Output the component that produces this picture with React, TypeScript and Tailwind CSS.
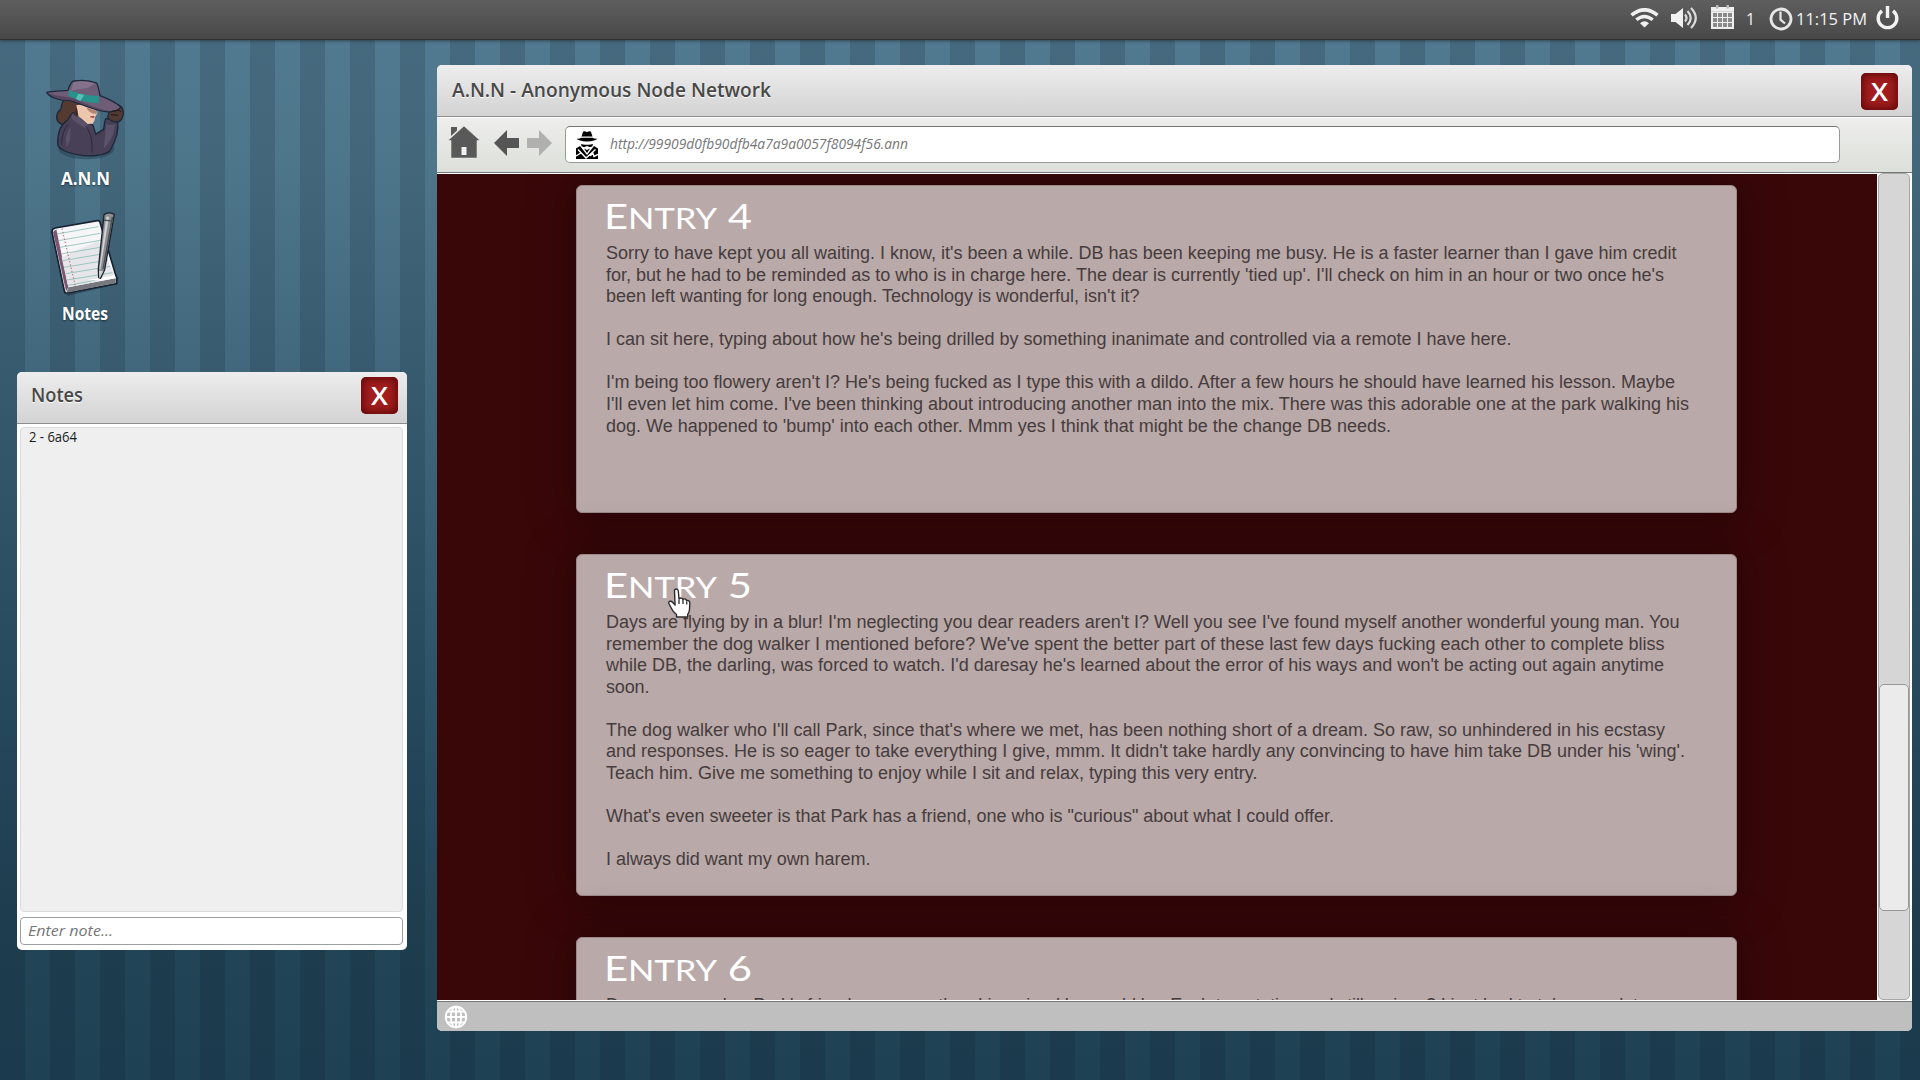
import { useLayoutEffect, useRef, useState } from "react";

/* Text set to an exact measure, either by tracking or by horizontal scale. */
function Fit({
  children,
  width,
  mode = "track",
  className = "",
}: {
  children: React.ReactNode;
  width: number;
  mode?: "track" | "scale";
  className?: string;
}) {
  const ref = useRef<HTMLSpanElement>(null);
  const [style, setStyle] = useState<React.CSSProperties>({});
  useLayoutEffect(() => {
    const el = ref.current;
    if (!el) return;
    const natural = el.getBoundingClientRect().width;
    const count = (el.textContent || "").length;
    setStyle(
      mode === "track"
        ? { letterSpacing: `${(width - natural) / Math.max(1, count - 1)}px` }
        : { transform: `scaleX(${width / natural})` },
    );
  }, []);
  return (
    <span className={`block whitespace-pre ${className}`} style={{ width }}>
      <span ref={ref} style={style} className="inline-block origin-left whitespace-pre">
        {children}
      </span>
    </span>
  );
}

type Line = [string, number];

const ENTRY4: Line[] = [
  ["Sorry to have kept you all waiting. I know, it's been a while. DB has been keeping me busy. He is a faster learner than I gave him credit", 1070.5],
  ["for, but he had to be reminded as to who is in charge here. The dear is currently 'tied up'. I'll check on him in an hour or two once he's", 1058],
  ["been left wanting for long enough. Technology is wonderful, isn't it?", 533.5],
  ["", 0],
  ["I can sit here, typing about how he's being drilled by something inanimate and controlled via a remote I have here.", 905.5],
  ["", 0],
  ["I'm being too flowery aren't I? He's being fucked as I type this with a dildo. After a few hours he should have learned his lesson. Maybe", 1069],
  ["I'll even let him come. I've been thinking about introducing another man into the mix. There was this adorable one at the park walking his", 1083],
  ["dog. We happened to 'bump' into each other. Mmm yes I think that might be the change DB needs.", 785],
];

const ENTRY5: Line[] = [
  ["Days are flying by in a blur! I'm neglecting you dear readers aren't I? Well you see I've found myself another wonderful young man. You", 1073.5],
  ["remember the dog walker I mentioned before? We've spent the better part of these last few days fucking each other to complete bliss", 1058.5],
  ["while DB, the darling, was forced to watch. I'd daresay he's learned about the error of his ways and won't be acting out again anytime", 1058],
  ["soon.", 43.5],
  ["", 0],
  ["The dog walker who I'll call Park, since that's where we met, has been nothing short of a dream. So raw, so unhindered in his ecstasy", 1059],
  ["and responses. He is so eager to take everything I give, mmm. It didn't take hardly any convincing to have him take DB under his 'wing'.", 1079],
  ["Teach him. Give me something to enjoy while I sit and relax, typing this very entry.", 651.5],
  ["", 0],
  ["What's even sweeter is that Park has a friend, one who is \"curious\" about what I could offer.", 728],
  ["", 0],
  ["I always did want my own harem.", 264.5],
];

const ENTRY6: Line[] = [
  ["Do you remember Park's friend was more than I imagined he would be. Each temptation and still curious? I just had to take complete", 1042],
];

function Entry({ n, lines, className }: { n: number; lines: Line[]; className: string }) {
  return (
    <article
      className={`w-[1161px] shrink-0 rounded-[6px] border border-[#9c8889] bg-[#b9a9a8] pl-[29px] pt-[15px] shadow-[0_0_45px_8px_rgba(0,0,0,0.3)] ${className}`}
    >
      <h2 className="-ml-[2px] font-['Lato'] text-[35px] leading-[29px] text-white">
        <Fit width={148} mode="scale">
          E<span className="text-[29px]">NTRY</span> {n}
        </Fit>
      </h2>
      <div className="mt-[11px] font-['Liberation_Sans',Arial,sans-serif] text-[18px] leading-[21.58px] text-[#463c3d]">
        {lines.map(([text, w], i) =>
          text ? (
            <Fit key={i} width={w}>
              {text}
            </Fit>
          ) : (
            <div key={i} className="h-[21.58px]" />
          ),
        )}
      </div>
    </article>
  );
}

function CloseButton() {
  return (
    <button className="mt-px flex h-[37px] w-[37px] items-center justify-center rounded-[5px] bg-[#a31d1e] pb-px font-['Open_Sans'] text-[26px] font-semibold leading-none text-white shadow-[inset_0_0_8px_2px_rgba(70,0,0,0.75)]">
      <Fit width={17} mode="scale">
        X
      </Fit>
    </button>
  );
}

function SpyPortrait() {
  return (
    <svg viewBox="138 84 246 252" className="ml-[2px] h-[84px] w-[82px]">
      <ellipse cx="262" cy="296" rx="84" ry="32" fill="#23394a" opacity=".45" />
      <g stroke="#1c283a" strokeWidth="4" strokeLinejoin="round">
        <path d="M198 146c-12 12-10 26-13 33-14 8-15 28-6 38 8 8 20 8 30 4l32-24 4-50z" fill="#553a31" />
        <path d="M204 212c8-8 10-22 20-24 20 4 38 26 58 38l8 26 24-14c2-14 2-22 6-32l36 4c4 30-6 64-24 94-16 12-60 18-96 10-28-6-60-14-60-34 0-30 6-54 28-68z" fill="#484057" />
        <path d="M334 172c8-14 32-10 38 8 4 16-4 34-16 36-14 0-28-6-30-16 4-8 4-18 8-28z" fill="#503a33" />
      </g>
      <path d="M232 166c14-6 54 6 64 22l-8 14-1 8-6 11-16 1-26-20z" fill="#ecc7ae" />
      <path d="M222 190c16 6 30 20 44 32l-4 14c-20-10-40-24-46-34z" fill="#5b5169" />
      <path
        d="M143 127c20-4 44-4 64-6 6-20 10-28 18-28 24-4 48-2 68 6 6 12 8 26 10 38 26 10 48 20 62 34-6 12-28 16-44 14-40-4-84-28-110-34-24 2-58-8-68-24z"
        fill="#6f5d78"
        stroke="#1c283a"
        strokeWidth="4"
        strokeLinejoin="round"
      />
      <path d="M224 96c22-4 46-2 64 5l-20 12-46 8-6 2z" fill="#8a7791" opacity=".8" />
      <path d="M210 119c26 12 60 18 90 18v22c-30 0-64-8-92-22z" fill="#27928b" />
      <path d="M238 131l18 4-12 18-14-6z" fill="#55c0b4" />
      <path d="M150 130c20 10 60 8 90 22 26 12 60 26 90 30-30 6-80-26-120-32-26 2-50-8-60-20z" fill="#564661" />
      <path d="M262 172l34 12-4 8c-14 0-24-6-30-20z" fill="#b28674" />
      <path d="M274 198l14 1-5 6-9-3z" fill="#b04a48" />
      <path d="M232 172c6 12 2 20 4 30l-12-8z" fill="#432c25" />
      <path d="M208 222c-16 16-20 44-20 62M260 228c16 20 22 50 18 80M290 254l26-16" fill="none" stroke="#2c283b" strokeWidth="3" />
      <path d="M214 232c-14 20-16 44-10 60 12-20 10-40 10-60zM322 222c8 4 18 4 26 0-2 30-14 54-34 74z" fill="#6a607c" opacity=".55" />
      <path d="M338 184l20-4 8 6M336 194l22 2" fill="none" stroke="#20150f" strokeWidth="3" />
    </svg>
  );
}

function NotepadPicture() {
  return (
    <svg viewBox="156 480 210 261" className="h-[87px] w-[70px]">
      <path d="M164 548l44 190 150-36 4-20z" fill="#1a2b3c" opacity=".5" />
      <path d="M162 546q0-10 10-12l126-22q6-1 8 5l50 168v16l-150 28q-6 0-7-6z" fill="#f6f6f8" stroke="#16222f" strokeWidth="5" strokeLinejoin="round" />
      <path d="M165 546l10-8 36 174-7 12z" fill="#7b5674" />
      <path d="M211 712l142-27v14l-148 29z" fill="#77787e" />
      <path d="M211 712l-20-90 110-50 52 112z" fill="#e6e6ea" />
      <path d="M177 552l124-22M181 572l126-22M186 592l126-22M190 612l128-22M194 632l130-22M198 652l132-22M203 671l134-22M207 690l137-22M210 706l140-26" stroke="#74b4a8" strokeWidth="2" />
      <path d="M192 536l40 172" stroke="#a04648" strokeWidth="2.5" strokeDasharray="4 6" />
      <path d="M270 690l80-14 3 8-46 8z" fill="#fff" />
      <path d="M318 494q12-10 31-1l-29 166-12 26-6-2-1-26z" fill="#8d8f93" stroke="#1b232d" strokeWidth="4" strokeLinejoin="round" />
      <path d="M325 500l8 0-26 158-3-2z" fill="#d0d2d5" />
      <path d="M341 500l5 2-29 156-4 0z" fill="#4e5156" />
      <path d="M303 662l13 2-12 22z" fill="#cfd0d3" />
      <path d="M318 510l28 4" stroke="#4c4f55" strokeWidth="4" />
    </svg>
  );
}

function DesktopIcon({ label, width, children, className }: { label: string; width: number; children: React.ReactNode; className: string }) {
  return (
    <div className={`flex w-[86px] flex-col items-center ${className}`}>
      {children}
      <Fit
        width={width}
        mode="scale"
        className="mt-1 font-['Open_Sans'] text-[18px] font-bold leading-[24px] text-white [text-shadow:0_1px_2px_rgba(0,0,0,.5)]"
      >
        {label}
      </Fit>
    </div>
  );
}

function TopBar() {
  return (
    <header className="absolute inset-x-0 top-0 flex h-10 items-start border-b border-[#2e2e2e] bg-linear-to-b from-[#5f5f5f] to-[#484848] font-['Open_Sans'] text-[17px] font-medium leading-[38px] text-[#f2f2f2] shadow-[0_1px_3px_rgba(0,0,0,.4)]">
      <svg viewBox="0 0 29 20" className="ml-[1630px] mt-2 h-5 w-[29px] shrink-0" fill="none" stroke="#f0f0f0">
        <path d="M1.5 7.2Q14.5-3.6 27.5 7.2" strokeWidth="3.6" />
        <path d="M6.3 11.8Q14.5 5 22.7 11.8" strokeWidth="3.4" />
        <path d="M10 15.2Q14.5 11.4 19 15.2L14.5 19.5z" fill="#f0f0f0" stroke="none" />
      </svg>
      <svg viewBox="0 0 28 24" className="ml-3 mt-1.5 h-6 w-7 shrink-0" fill="none" stroke="#dcdcdc" strokeWidth="2.2">
        <path d="M0 8h4.5L12 2v20l-7.500-6H0z" fill="#f0f0f0" stroke="none" />
        <path d="M14 8.500q3 3.500 0 7M16.500 5q6.500 7 0 14M20 2q9.500 10 0 20" />
      </svg>
      <svg viewBox="0 0 23 24" className="ml-3 mt-[5px] h-6 w-[23px] shrink-0">
        <path d="M0 2h23v22H0z" fill="#efefef" />
        <path d="M5 0h2.500v3.500H5zM15.500 0H18v3.500h-2.500z" fill="#bdbdbd" />
        <path d="M0 6.500h23" stroke="#cfcfcf" strokeWidth=".8" />
        <g fill="#8a8a8a">
          {[8, 13, 18].map((y) =>
            [2, 7, 12, 17].map((x) => <rect key={`${x}-${y}`} x={x} y={y} width="4" height="4" />),
          )}
        </g>
      </svg>
      <Fit width={9} mode="scale" className="ml-[12px] shrink-0">
        1
      </Fit>
      <svg viewBox="0 0 24 24" className="ml-[14px] mt-[7px] h-6 w-6 shrink-0" fill="none" stroke="#e6e6e6">
        <circle cx="12" cy="12" r="10" strokeWidth="2.800" />
        <path d="M11.500 4.500v8.200l4.500 3.800" strokeWidth="2.200" />
      </svg>
      <Fit width={71} mode="scale" className="ml-[3px] shrink-0">
        11:15 PM
      </Fit>
      <svg viewBox="0 0 23 24" className="ml-[9px] mt-1.5 h-6 w-[23px] shrink-0" fill="none" stroke="#f2f2f2" strokeWidth="3.400">
        <path d="M6 4.800a9.300 9.300 0 1 0 11 0" />
        <path d="M11.500 0v12" />
      </svg>
    </header>
  );
}

function SpyGlyph() {
  return (
    <svg viewBox="0 0 22 28" className="h-7 w-[22px] shrink-0" fill="#000">
      <path d="M5.500 5.600L7 1q.4-1 1.400-.8l2.600.8 2.600-.8q1-.2 1.400.8l1.500 4.600z" />
      <path d="M.5 7.600q2.500.6 5-.8h11q2.500 1.400 5 .8-2 2.800-10.500 2.800T.5 7.600z" />
      <path d="M5 13q2 1 6 .8 4 .2 6-.8l-.6 2.200q-2 1.300-4 .2-1.400-.7-2.800 0-2 1.100-4-.2z" />
      <path d="M0 17.500L4 15l7 9 7-9 4 2.500V28H0z" />
      <path d="M2 18.500l8 8.500 9.500-8.500M0 25l5-3M14 25l3-2.500 1 3 4-2" stroke="#fff" strokeWidth="1.400" fill="none" />
      <path d="M8 17.500l3 1.500 3-1.500-3 4.500z" />
    </svg>
  );
}

function BrowserWindow() {
  return (
    <section className="absolute left-[437px] top-[65px] flex h-[966px] w-[1475px] flex-col overflow-hidden rounded-[5px] bg-white">
      <div className="flex h-[52px] shrink-0 items-center justify-between border-b border-[#8d8d8d] bg-linear-to-b from-[#ededed] to-[#d3d3d3] pl-[15px] pr-[14px]">
        <Fit
          width={319}
          mode="scale"
          className="pb-[2px] font-['Open_Sans'] text-[19px] font-semibold leading-6 text-[#484848] [text-shadow:0_1px_1px_#fff]"
        >
          A.N.N - Anonymous Node Network
        </Fit>
        <CloseButton />
      </div>
      <div className="flex h-[56px] shrink-0 items-start border-b border-t border-b-[#777] border-t-white bg-linear-to-b from-[#eeeeec] to-[#dcdfda] pt-2 pl-[11px]">
        <svg viewBox="0 0 32 32" className="h-8 w-8 shrink-0" fill="#595959">
          <path d="M3 1h6v3.500L3 10z" />
          <path d="M16 0L32 14.500h-3V32H3V14.500H0z" stroke="#e6e6e4" strokeWidth=".6" />
          <path d="M13.500 21h5v8h-5z" fill="#f2f2f2" />
        </svg>
        <svg viewBox="0 0 25 26" className="ml-[14px] mt-[4px] h-[26px] w-[25px] shrink-0" fill="#555">
          <path d="M0 13L13 0v8h12v10H13v8z" />
        </svg>
        <svg viewBox="0 0 25 26" className="ml-2 mt-[4px] h-[26px] w-[25px] shrink-0" fill="#b0b0ae">
          <path d="M25 13L12 0v8H0v10h12v8z" />
        </svg>
        <div className="ml-[13px] flex h-[37px] w-[1275px] items-center rounded-[5px] border border-[#9a9a98] border-t-[#777] bg-white pl-[10px]">
          <SpyGlyph />
          <Fit
            width={298}
            mode="scale"
            className="mb-[2px] ml-[12px] font-['Open_Sans'] text-[14px] italic leading-5 text-[#777]"
          >
            http://99909d0fb90dfb4a7a9a0057f8094f56.ann
          </Fit>
        </div>
      </div>
      <div className="flex h-[827px] shrink-0">
        <main className="mt-px flex h-[826px] w-[1440px] shrink-0 flex-col items-start gap-[41px] overflow-hidden bg-[#3a0709] pl-[139px] pt-[11px]">
          <Entry n={4} lines={ENTRY4} className="h-[328px]" />
          <Entry n={5} lines={ENTRY5} className="h-[342px]" />
          <Entry n={6} lines={ENTRY6} className="h-[342px]" />
        </main>
        <div className="ml-px h-[827px] w-8 rounded-[5px] border border-[#a9a9a9] bg-[#d6d6d6] pt-[510px]">
          <div className="h-[227px] w-[30px] rounded-[5px] border border-[#969896] bg-[#ebebeb]" />
        </div>
      </div>
      <footer className="mt-px flex h-[30px] shrink-0 items-center border-t border-[#777] bg-[#bfbfbf] pl-[7px]">
        <svg viewBox="0 0 24 24" className="h-6 w-6" fill="none" stroke="#fff" strokeWidth="1.800">
          <circle cx="12" cy="12" r="10.300" />
          <ellipse cx="12" cy="12" rx="5.200" ry="10.300" />
          <path d="M12 1.500v21M1.500 12h21M3.500 6.500h17M3.500 17.500h17" />
        </svg>
      </footer>
    </section>
  );
}

function NotesWindow() {
  return (
    <section className="absolute left-[17px] top-[372px] flex h-[578px] w-[390px] flex-col overflow-hidden rounded-[5px] bg-white font-['Open_Sans']">
      <div className="flex h-[52px] shrink-0 items-center justify-between border-b border-[#8d8d8d] bg-linear-to-b from-[#ededed] to-[#d3d3d3] pb-[5px] pl-[14px] pr-[9px]">
        <Fit width={52} mode="scale" className="text-[19px] font-semibold leading-6 text-[#484848] [text-shadow:0_1px_1px_#fff]">
          Notes
        </Fit>
        <CloseButton />
      </div>
      <div className="ml-[3px] mt-[3px] h-[485px] w-[383px] rounded-[4px] border border-[#d8dcde] bg-[#efefef] pl-[8px]">
        <Fit width={48} mode="scale" className="text-[14px] leading-[18px] text-[#1c1c1c]">
          2 - 6a64
        </Fit>
      </div>
      <div className="ml-[3px] mt-[5px] flex h-[28px] w-[383px] items-center rounded-[4px] border border-[#9b9fa2] bg-white pl-[7px]">
        <Fit width={85} mode="scale" className="mb-px text-[14.5px] italic leading-5 text-[#777]">
          Enter note...
        </Fit>
      </div>
    </section>
  );
}

function HandCursor() {
  return (
    <svg viewBox="0 0 24 30" className="absolute left-[668px] top-[588px] h-[30px] w-6">
      <path
        d="M6.500 3q0-2 1.800-2t2 2l.7 8q1-1.300 2.600-.8 1 .3 1.200 1.300 1.200-1 2.600-.3 1 .5 1.100 1.500 1.500-.6 2.500.3t.8 2.500l-.3 6q-.2 3-1.800 5v2.500H8.500v-2.500Q5 24 3.500 20.500l-2.600-5q-.5-1.800 1-2.200t2.600 1l2.600 2.700z"
        fill="#fff"
        stroke="#2b2b2b"
        strokeWidth="1.400"
        strokeLinejoin="round"
      />
      <path d="M11 11.500v4.500M15 12v4M18.700 13.500v3" stroke="#2b2b2b" strokeWidth="1.300" />
    </svg>
  );
}

export default function App() {
  return (
    <div className="relative h-[1080px] w-[1920px] overflow-hidden bg-[linear-gradient(to_bottom,#527a90_0%,#4e768b_15%,#41677c_35%,#2c5267_65%,#224557_85%,#1f4154_100%)]">
      <div className="absolute inset-0 bg-[repeating-linear-gradient(to_right,rgba(8,20,38,0.16)_0px,rgba(8,20,38,0.16)_25px,transparent_25px,transparent_50px)]" />
      <DesktopIcon label="A.N.N" width={49} className="absolute left-[42px] top-[78px]">
        <SpyPortrait />
      </DesktopIcon>
      <DesktopIcon label="Notes" width={46} className="absolute left-[42px] top-[210px]">
        <NotepadPicture />
      </DesktopIcon>
      <NotesWindow />
      <BrowserWindow />
      <TopBar />
      <HandCursor />
    </div>
  );
}
